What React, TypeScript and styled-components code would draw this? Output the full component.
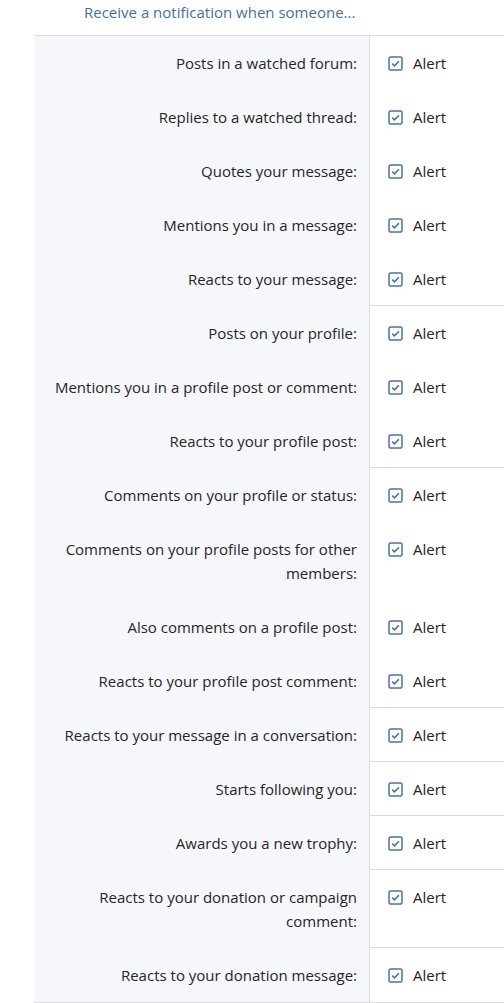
import React from 'react';
import styled, { createGlobalStyle } from 'styled-components';

const GlobalStyle = createGlobalStyle`
  body {
    margin: 0;
    background: #fff;
    font-family: "Open Sans", "Noto Sans", sans-serif;
  }
`;

const groups: string[][] = [
  [
    'Posts in a watched forum:',
    'Replies to a watched thread:',
    'Quotes your message:',
    'Mentions you in a message:',
    'Reacts to your message:',
  ],
  ['Posts on your profile:', 'Mentions you in a profile post or comment:', 'Reacts to your profile post:'],
  [
    'Comments on your profile or status:',
    'Comments on your profile posts for other members:',
    'Also comments on a profile post:',
    'Reacts to your profile post comment:',
  ],
  ['Reacts to your message in a conversation:'],
  ['Starts following you:'],
  ['Awards you a new trophy:'],
  ['Reacts to your donation or campaign comment:'],
  ['Reacts to your donation message:'],
];

const Page = styled.div`
  padding-left: 34px;
`;

const Block = styled.div`
  border-bottom: 1px solid #dadde1;
`;

const Header = styled.div`
  height: 35px;
  padding-left: 50px;
  border-bottom: 1px solid #dadde1;
  font-size: 15px;
  line-height: 24px;
  color: #4470aa;
`;

const Row = styled.div`
  display: flex;
`;

const Label = styled.div`
  width: 336px;
  flex: none;
  box-sizing: border-box;
  padding: 15px 12px;
  background: #f5f7fa;
  border-right: 1px solid #dadde1;
  text-align: right;
  font-size: 15px;
  line-height: 24px;
  color: #262626;
`;

const Control = styled.div<{ $last: boolean }>`
  flex: 1;
  box-sizing: border-box;
  padding: 15px 0 0 18px;
  border-bottom: ${(p) => (p.$last ? '1px solid #dadde1' : '1px solid transparent')};
  display: flex;
  align-items: flex-start;
  gap: 10px;
  font-size: 15px;
  line-height: 24px;
  color: #262626;
`;

const Box = styled.svg`
  width: 15px;
  height: 15px;
  margin-top: 5px;
  flex: none;
`;

const Check = () => (
  <Box viewBox="0 0 15 15">
    <rect x="1" y="1" width="13" height="13" rx="1.5" fill="#fff" stroke="#4672b3" strokeWidth="1.5" />
    <path d="M4.2 7.6 L6.5 9.8 L10.9 5.2" fill="none" stroke="#4672b3" strokeWidth="1.6" />
  </Box>
);

export default function App() {
  return (
    <Page>
      <GlobalStyle />
      <Block>
        <Header>Receive a notification when someone...</Header>
        {groups.map((g, gi) =>
          g.map((label, i) => (
            <Row key={`${gi}-${i}`}>
              <Label>{label}</Label>
              <Control $last={i === g.length - 1 && gi !== groups.length - 1}>
                <Check />
                <span>Alert</span>
              </Control>
            </Row>
          ))
        )}
      </Block>
    </Page>
  );
}
